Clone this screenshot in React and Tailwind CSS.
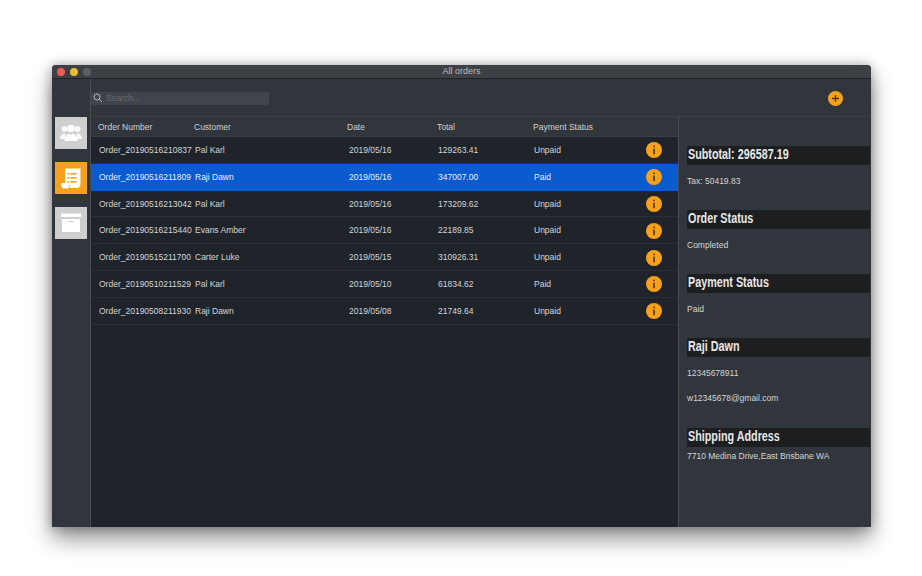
import React from 'react';

const orders = [
  { id: 'Order_20190516210837', customer: 'Pal Karl', date: '2019/05/16', total: '129263.41', status: 'Unpaid' },
  { id: 'Order_20190516211809', customer: 'Raji Dawn', date: '2019/05/16', total: '347007.00', status: 'Paid', selected: true },
  { id: 'Order_20190516213042', customer: 'Pal Karl', date: '2019/05/16', total: '173209.62', status: 'Unpaid' },
  { id: 'Order_20190516215440', customer: 'Evans Amber', date: '2019/05/16', total: '22189.85', status: 'Unpaid' },
  { id: 'Order_20190515211700', customer: 'Carter Luke', date: '2019/05/15', total: '310926.31', status: 'Unpaid' },
  { id: 'Order_20190510211529', customer: 'Pal Karl', date: '2019/05/10', total: '61834.62', status: 'Paid' },
  { id: 'Order_20190508211930', customer: 'Raji Dawn', date: '2019/05/08', total: '21749.64', status: 'Unpaid' },
];

function InfoIcon() {
  return (
    <svg width="16" height="16" viewBox="0 0 16 16">
      <circle cx="8" cy="8" r="8" fill="#f5a11c" />
      <rect x="7.2" y="3.6" width="1.6" height="1.6" fill="#4a3410" />
      <rect x="7.2" y="6.6" width="1.6" height="5.6" fill="#4a3410" />
    </svg>
  );
}

function PeopleIcon() {
  return (
    <svg width="22" height="18" viewBox="0 0 22 18" fill="#fff">
      <circle cx="4.500" cy="5" r="3" opacity="0.85" />
      <circle cx="17.500" cy="5" r="3" opacity="0.85" />
      <path d="M0 15c0-3 1.500-5 3.500-5.500l2.500 1-1 4.500z" opacity="0.85" />
      <path d="M22 15c0-3-1.500-5-3.500-5.500l-2.500 1 1 4.500z" opacity="0.85" />
      <circle cx="11" cy="4.500" r="3.800" />
      <path d="M4.500 17c0-4 2.500-6.500 4.500-7.500l2 1.500 2-1.500c2 1 4.500 3.500 4.500 7.500z" />
    </svg>
  );
}

function ReceiptIcon() {
  return (
    <svg width="21" height="23" viewBox="0 0 21 23">
      <path d="M4 1.500h15.500v15c0 2-.5 3-2 4.500H8c1-1 1-2.500 0-3.500H4z" fill="#fff" />
      <path d="M0 17.500c0-1 1-1.500 2-1.500h5c1.500 1 1.500 4 0 5.500H3c-1.500 0-3-1.500-3-4z" fill="#fff" />
      <g fill="#f5a11c">
        <rect x="6.500" y="6" width="2" height="1.600" />
        <rect x="9.500" y="6" width="6" height="1.600" />
        <rect x="6.500" y="10" width="2" height="1.600" />
        <rect x="9.500" y="10" width="6" height="1.600" />
        <rect x="6.500" y="14" width="2" height="1.600" />
        <rect x="9.500" y="14" width="6" height="1.600" />
      </g>
    </svg>
  );
}

function ArchiveIcon() {
  return (
    <svg width="20" height="20" viewBox="0 0 20 20" fill="#fff">
      <rect x="0" y="0.500" width="20" height="3.500" />
      <path d="M1 6h18v13H1z" />
      <rect x="7" y="8" width="6" height="1" fill="#cfcfcf" />
    </svg>
  );
}

function SectionTitle({ children }) {
  return (
    <div className="h-[19px] bg-[#1d1e20] pl-[1px] pb-[2px] flex items-center overflow-hidden">
      <span className="origin-left scale-x-[0.77] whitespace-nowrap text-[14px] font-bold text-[#e8e8e8]">{children}</span>
    </div>
  );
}

export default function App() {
  return (
    <div className="min-h-screen bg-white pt-[65px] pl-[52px] font-['Liberation_Sans',sans-serif]">
      <div className="w-[819px] h-[462px] flex flex-col bg-[#31363c] rounded-t-[4px] shadow-[0_12px_22px_rgba(0,0,0,0.42),0_0_12px_rgba(0,0,0,0.3)] overflow-hidden">
        <div className="h-[14px] shrink-0 flex items-center bg-[#3d4146] border-b border-[#1f2226] relative">
          <div className="flex gap-[5px] pl-[5px]">
            <span className="w-[8px] h-[8px] rounded-full bg-[#ec5a55]" />
            <span className="w-[8px] h-[8px] rounded-full bg-[#e8bd30]" />
            <span className="w-[8px] h-[8px] rounded-full bg-[#5c6066]" />
          </div>
          <span className="absolute inset-x-0 top-0 text-center text-[9px] leading-[13px] text-[#b9bbbe]">All orders</span>
        </div>

        <div className="flex-1 flex min-h-0">
          <div className="w-[39px] shrink-0 flex flex-col pt-[38px] pl-[3px] border-r border-[#4a4e53]">
            <div className="w-[32px] h-[32px] bg-[#cfcfcf] flex items-center justify-center"><PeopleIcon /></div>
            <div className="w-[32px] h-[32px] mt-[13px] bg-[#f5a11c] flex items-center justify-center"><ReceiptIcon /></div>
            <div className="w-[32px] h-[32px] mt-[13px] bg-[#cfcfcf] flex items-center justify-center"><ArchiveIcon /></div>
          </div>

          <div className="flex-1 flex flex-col min-w-0">
            <div className="h-[38px] shrink-0 flex items-center justify-between border-b border-[#3c4045] pt-[1px] pr-[28px]">
              <div className="w-[178px] h-[13px] bg-[#41454b] flex items-center pl-[2px] gap-[3px] rounded-[1px]">
                <svg width="10" height="10" viewBox="0 0 10 10" fill="none" stroke="#b5b7ba" strokeWidth="1">
                  <circle cx="4" cy="4" r="3" />
                  <path d="M6.300 6.300 9 9" />
                </svg>
                <span className="text-[8.500px] text-[#666a6f]">Search...</span>
              </div>
              <div className="w-[15px] h-[15px] rounded-full bg-[#f5a11c] flex items-center justify-center">
                <svg width="9" height="9" viewBox="0 0 9 9" stroke="#4a3410" strokeWidth="1.300">
                  <path d="M4.500 1v7M1 4.500h7" />
                </svg>
              </div>
            </div>

            <div className="flex-1 flex min-h-0">
              <div className="w-[587px] shrink-0 flex flex-col">
                <div className="h-[20px] shrink-0 grid grid-cols-[96px_153px_90px_96px_1fr] items-center pl-[7px] pt-[1px] text-[8.500px] text-[#d0d1d3] border-b border-[#3c4045]">
                  <span>Order Number</span>
                  <span>Customer</span>
                  <span>Date</span>
                  <span>Total</span>
                  <span>Payment Status</span>
                </div>
                <div className="flex-1 bg-[#1f242a]">
                  {orders.map((o) => (
                    <div
                      key={o.id}
                      className={`h-[26.800px] grid grid-cols-[96px_154px_89px_96px_112px_16px] items-center pl-[8px] pt-[1px] text-[8.500px] border-b ${
                        o.selected ? 'bg-[#0a5ad0] border-[#0a5ad0] text-[#e8eefa]' : 'border-[#2c3036] text-[#d4d5d7]'
                      }`}
                    >
                      <span className="whitespace-nowrap">{o.id}</span>
                      <span>{o.customer}</span>
                      <span>{o.date}</span>
                      <span>{o.total}</span>
                      <span>{o.status}</span>
                      <InfoIcon />
                    </div>
                  ))}
                </div>
              </div>

              <div className="flex-1 border-l border-[#4a4e53] pt-[29px] pl-[8px] pr-[1px] text-[8.500px] text-[#d4d5d7]">
                <SectionTitle>Subtotal: 296587.19</SectionTitle>
                <p className="mt-[10px] leading-[12px]">Tax: 50419.83</p>
                <div className="mt-[23px]"><SectionTitle>Order Status</SectionTitle></div>
                <p className="mt-[10px] leading-[12px]">Completed</p>
                <div className="mt-[23px]"><SectionTitle>Payment Status</SectionTitle></div>
                <p className="mt-[10px] leading-[12px]">Paid</p>
                <div className="mt-[23px]"><SectionTitle>Raji Dawn</SectionTitle></div>
                <p className="mt-[10px] leading-[12px]">12345678911</p>
                <p className="mt-[13px] leading-[12px]">w12345678@gmail.com</p>
                <div className="mt-[24px]"><SectionTitle>Shipping Address</SectionTitle></div>
                <p className="mt-[3px] leading-[12px]">7710 Medina Drive,East Brisbane WA</p>
              </div>
            </div>
          </div>
        </div>
      </div>
    </div>
  );
}
